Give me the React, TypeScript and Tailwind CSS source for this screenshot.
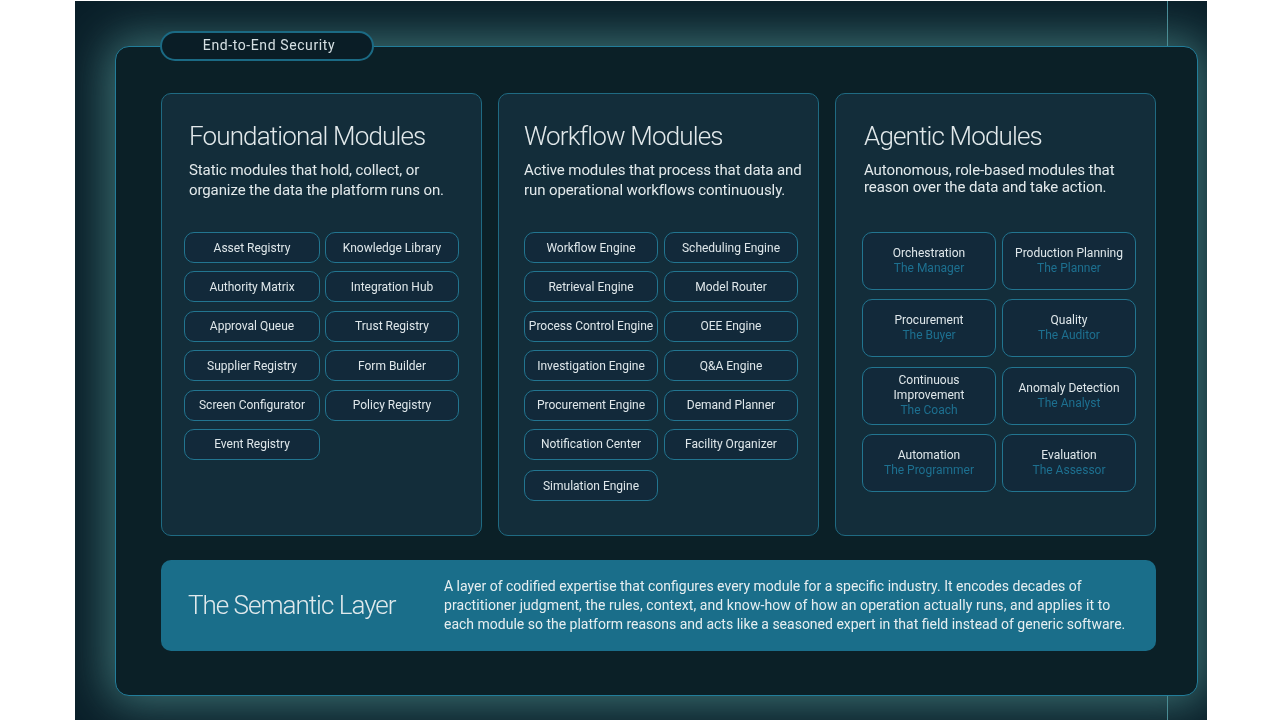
import React from 'react';

type Chip = { name: string; role?: string };

const foundational: Chip[] = [
    'Asset Registry', 'Knowledge Library', 'Authority Matrix', 'Integration Hub', 'Approval Queue',
    'Trust Registry', 'Supplier Registry', 'Form Builder', 'Screen Configurator', 'Policy Registry', 'Event Registry',
].map((name) => ({ name }));

const workflow: Chip[] = [
    'Workflow Engine', 'Scheduling Engine', 'Retrieval Engine', 'Model Router', 'Process Control Engine', 'OEE Engine',
    'Investigation Engine', 'Q&A Engine', 'Procurement Engine', 'Demand Planner', 'Notification Center',
    'Facility Organizer', 'Simulation Engine',
].map((name) => ({ name }));

const agentic: Chip[] = [
    { name: 'Orchestration', role: 'The Manager' },
    { name: 'Production Planning', role: 'The Planner' },
    { name: 'Procurement', role: 'The Buyer' },
    { name: 'Quality', role: 'The Auditor' },
    { name: 'Continuous Improvement', role: 'The Coach' },
    { name: 'Anomaly Detection', role: 'The Analyst' },
    { name: 'Automation', role: 'The Programmer' },
    { name: 'Evaluation', role: 'The Assessor' },
];

const ModuleChip = ({ name }: Chip) => (
    <div
        className={`flex h-[31px] items-center justify-center rounded-[10px] border border-[#227590] bg-[#12293a] text-[12px] leading-none whitespace-nowrap text-[#dfe7ea] ${
            name === 'Simulation Engine' ? 'mt-[2px]' : ''
        }`}
    >
        {name}
    </div>
);

const AgentChip = ({ name, role }: Chip) => (
    <div className="flex h-[58px] flex-col items-center justify-center rounded-[10px] border border-[#227590] bg-[#12293a] text-center text-[12px] leading-[15px] text-[#dfe7ea]">
        <span className="w-[112px]">{name}</span>
        <span className="text-[#1d7090]">{role}</span>
    </div>
);

const Card = ({ title, lines, padLeft, descClass, children }: { title: string; lines: string[]; padLeft: string; descClass: string; children: React.ReactNode }) => (
    <section className="h-[443px] w-[321px] rounded-[10px] border border-[#1f6a82] bg-[#132d3a]">
        <div className={`${padLeft} h-[138px] pt-[24px]`}>
            <h2 className="text-[26px] leading-[36px] font-light tracking-[-0.85px] text-[#e2e9eb]">{title}</h2>
            <p className={`text-[15px] tracking-[-0.1px] whitespace-nowrap text-[#e2e9eb] ${descClass}`}>
                {lines.map((line) => (
                    <span key={line} className="block">{line}</span>
                ))}
            </p>
        </div>
        {children}
    </section>
);

export default function App() {
    return (
        <div className="h-[720px] w-[1280px] overflow-hidden bg-white pt-px pl-[75px] font-['Roboto',sans-serif]">
            <div className="relative h-[719px] w-[1132px] overflow-hidden bg-[#0a1f29] pt-[45px] pl-[40px] blur-[0.7px]">
                <div className="absolute top-0 left-[1092px] h-full w-px bg-[#4a8d99]" />
                <main className="relative h-[650px] w-[1083px] rounded-[14px] border border-[#227d9a] bg-[#0b2027] pt-[46px] pl-[45px] shadow-[0_0_46px_8px_rgba(78,140,140,0.75)]">
                    <div className="absolute top-[-16px] left-[44px] flex h-[30px] w-[214px] items-center justify-center rounded-full border-[2px] border-[#1b6a84] bg-[#0a1d26] pb-[2px] pl-[4px] text-[14px] tracking-[0.6px] text-[#d6e0e3]">
                        End-to-End Security
                    </div>
                    <div className="flex gap-[16px]">
                        <Card title="Foundational Modules" padLeft="pl-[27px]" descClass="mt-[6px] leading-[20px]" lines={['Static modules that hold, collect, or', 'organize the data the platform runs on.']}>
                            <div className="ml-[22px] grid w-[275px] grid-cols-[136px_134px] gap-x-[5px] gap-y-[8.4px]">
                                {foundational.map((chip) => <ModuleChip key={chip.name} {...chip} />)}
                            </div>
                        </Card>
                        <Card title="Workflow Modules" padLeft="pl-[25px]" descClass="mt-[6px] leading-[20px]" lines={['Active modules that process that data and', 'run operational workflows continuously.']}>
                            <div className="ml-[25px] grid w-[274px] grid-cols-[134px_134px] gap-x-[6px] gap-y-[8.4px]">
                                {workflow.map((chip) => <ModuleChip key={chip.name} {...chip} />)}
                            </div>
                        </Card>
                        <Card title="Agentic Modules" padLeft="pl-[28px]" descClass="mt-[8px] leading-[17px]" lines={['Autonomous, role-based modules that', 'reason over the data and take action.']}>
                            <div className="ml-[26px] grid w-[274px] grid-cols-[134px_134px] gap-x-[6px] gap-y-[9.3px]">
                                {agentic.map((chip) => <AgentChip key={chip.name} {...chip} />)}
                            </div>
                        </Card>
                    </div>
                    <section className="mt-[24px] flex h-[91px] w-[995px] items-center rounded-[10px] bg-[#1a6e8a] pl-[27px]">
                        <h2 className="w-[256px] text-[26px] font-light tracking-[-1px] text-[#e0e9ec]">The Semantic Layer</h2>
                        <p className="text-[14px] leading-[19px] whitespace-nowrap text-[#e6eef0]">
                            <span className="block">A layer of codified expertise that configures every module for a specific industry. It encodes decades of</span>
                            <span className="block tracking-[0.08px]">practitioner judgment, the rules, context, and know-how of how an operation actually runs, and applies it to</span>
                            <span className="block">each module so the platform reasons and acts like a seasoned expert in that field instead of generic software.</span>
                        </p>
                    </section>
                </main>
            </div>
        </div>
    );
}
